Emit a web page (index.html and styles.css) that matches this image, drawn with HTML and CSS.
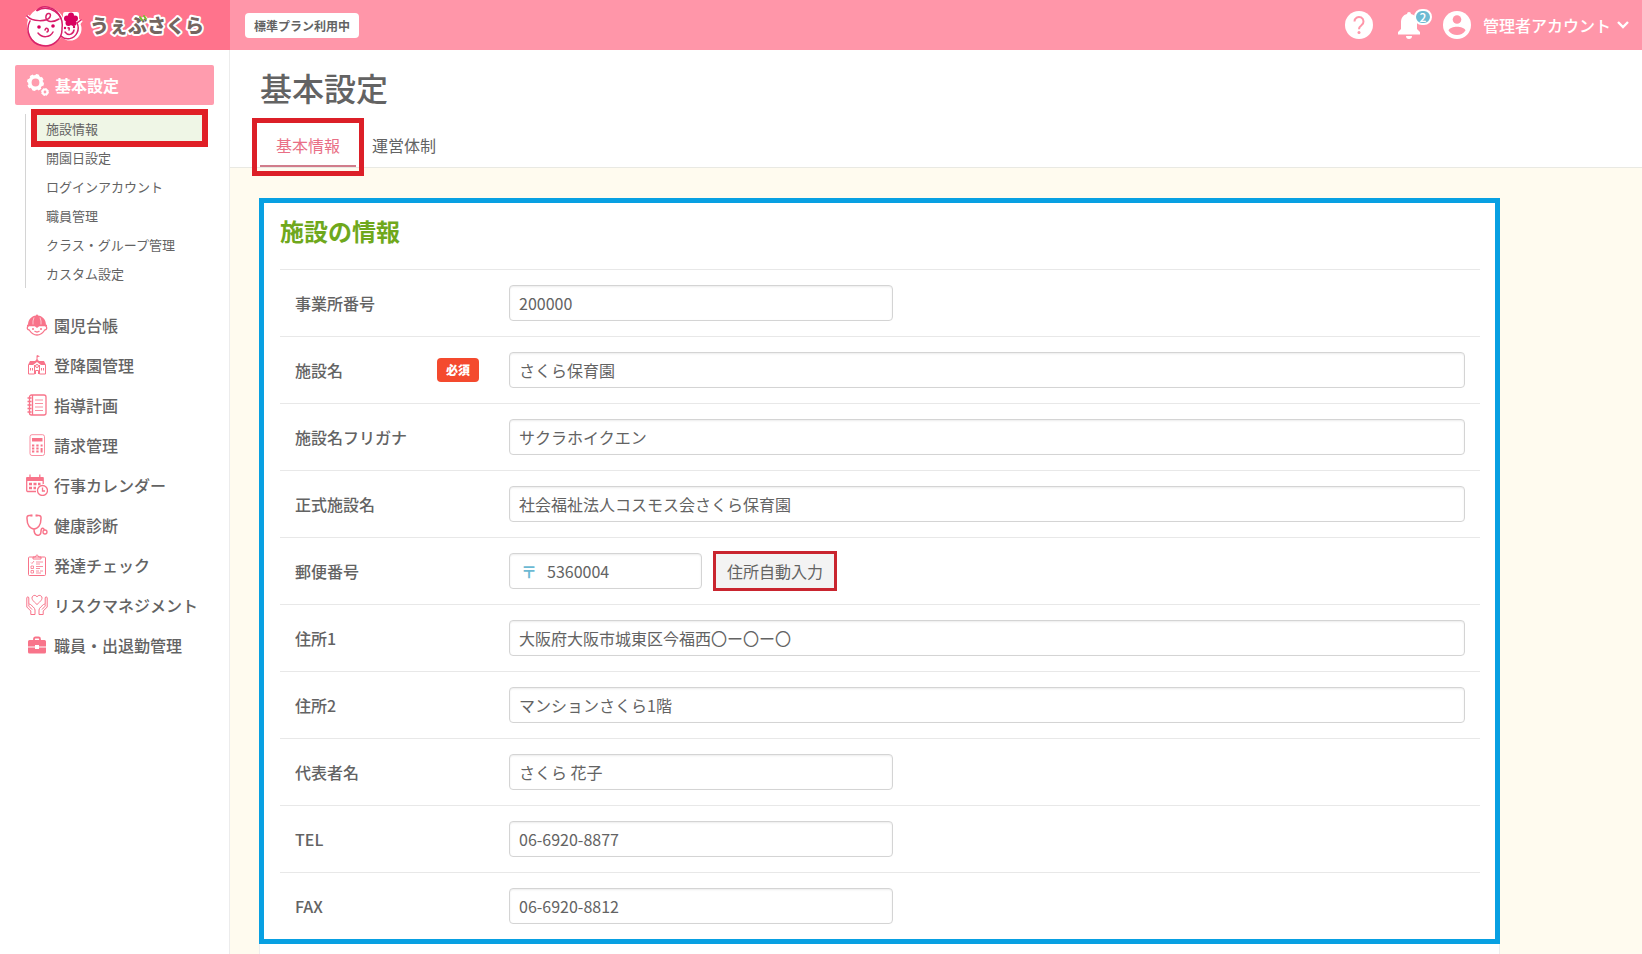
FILE: index.html
```html
<!DOCTYPE html>
<html lang="ja">
<head>
<meta charset="utf-8">
<meta name="viewport" content="width=device-width, initial-scale=1">
<title>基本設定 | うぇぶさくら</title>
<link rel="stylesheet" href="styles.css">
</head>
<body>
<header class="topbar">
  <a class="brand" href="#" aria-label="うぇぶさくら">
    <svg width="186" height="46" viewBox="0 0 186 46">
      <g fill="#fff" stroke="#fff" stroke-width="4" stroke-linejoin="round">
        <circle cx="22" cy="24" r="17"/><circle cx="46" cy="27" r="9.500"/>
        <path d="M3 14q6 7 15 5M57 18q-3 5-8 5" fill="none"/><path d="M41 12h12v10H41z"/>
      </g>
      <g fill="none" stroke="#d8226b" stroke-width="1.500" stroke-linecap="round">
        <path d="M6 19a17 17 0 1 0 32 7A17 17 0 0 0 13 8.500"/>
        <path d="M3 14c5 6 20 6 23 1 2-4-3-5-4-1-1 5 5 8 13 3"/>
        <path d="M13 8.500c5-6 19-5 24 8M37 34c5 5 13 3 16-3 2-4 1-8 0-10l4-3"/>
        <path d="M14 31c4 5 12 5 15-1M21 28q1-3 3-1 1 2-1 3M41 30c3 4 8 3 9-2M44 26q2-1 1 2"/>
      </g>
      <g fill="#d8005f">
        <circle cx="15" cy="25" r="1.800"/><circle cx="29" cy="24" r="1.800"/><circle cx="41" cy="26" r="1.200"/><circle cx="50" cy="25" r="1.200"/>
        <circle cx="47" cy="13.500" r="3"/><circle cx="51" cy="16.500" r="3"/><circle cx="49.500" cy="21" r="3"/><circle cx="44.500" cy="21" r="3"/><circle cx="43" cy="16.500" r="3"/><circle cx="47" cy="18" r="3"/>
      </g>
      <text class="brand-text" x="66" y="31">うぇぶさくら</text>
      <path d="M116 15l2 3M120 14l2 3" stroke="#7dbb2b" stroke-width="2" stroke-linecap="round"/>
    </svg>
  </a>
  <span class="plan">標準プラン利用中</span>
  <nav class="tools">
    <a class="tool" href="#" aria-label="ヘルプ">
      <svg width="28" height="28" viewBox="0 0 28 28"><circle cx="14" cy="14" r="14" fill="#fff"/><path d="M9.500 10.500a4.500 4.500 0 1 1 7 3.700c-1.800 1.300-2.500 2-2.500 4" fill="none" stroke="#ff96a9" stroke-width="2"/><circle cx="14" cy="21.500" r="1.500" fill="#ff96a9"/></svg>
    </a>
    <a class="tool bell" href="#" aria-label="お知らせ">
      <svg width="22" height="28" viewBox="0 0 22 28"><path d="M11 1a2 2 0 0 1 2 2c4 1 6 4 6 8v7l3 3v2.500H0V21l3-3v-7c0-4 2-7 6-8a2 2 0 0 1 2-2zM8 25h6a3 3 0 0 1-6 0z" fill="#fff"/></svg>
      <span class="count">2</span>
    </a>
    <a class="account" href="#">
      <svg width="28" height="28" viewBox="0 0 28 28"><circle cx="14" cy="14" r="14" fill="#fff"/><circle cx="14" cy="8.500" r="4.300" fill="#ff96a9"/><path d="M5.500 19.500c2-5 15-5 17 0-4 6-13 6-17 0z" fill="#ff96a9"/></svg>
      <span>管理者アカウント</span>
      <svg class="chevron" width="12" height="8" viewBox="0 0 12 8"><path d="M1 1l5 5 5-5" fill="none" stroke="#fff" stroke-width="2.400"/></svg>
    </a>
  </nav>
</header>

<div class="layout">
  <aside class="sidebar">
    <a class="nav-current" href="#">
      <svg width="22" height="22" viewBox="0 0 22 22"><g fill="none" stroke="#fff"><circle cx="8.500" cy="8.500" r="5.700" stroke-width="3.600"/><circle cx="8.500" cy="8.500" r="7.600" stroke-width="1.800" stroke-dasharray="3.400 2.570"/><circle cx="18" cy="18" r="2.400" stroke-width="2"/><circle cx="18" cy="18" r="3.500" stroke-width="1" stroke-dasharray="1.600 1.150"/></g></svg>
      基本設定
    </a>
    <ul class="subnav">
      <li><a class="marked" href="#">施設情報</a></li>
      <li><a href="#">開園日設定</a></li>
      <li><a href="#">ログインアカウント</a></li>
      <li><a href="#">職員管理</a></li>
      <li><a href="#">クラス・グループ管理</a></li>
      <li><a href="#">カスタム設定</a></li>
    </ul>
    <ul class="nav">
      <li><a href="#"><svg viewBox="0 0 22 22"><path class="solid" d="M2 11C2 5 6 2 10 1.500a1 1 0 0 1 2 0C16 2 20 5 20 11z"/><path d="M1 11.500h20M2.500 12c-2 1-1.500 4 .7 4 2 3 5 5 7.800 5s5.800-2 7.800-5c2.200 0 2.700-3 .7-4M8.500 17q2.500 2 5 0"/><path d="M8 3.500Q6.500 7 7 10.500M14 3.500q1.500 3.500 1 7" stroke="#fff" stroke-width=".6"/><path class="solid" d="M8 11.500l3 2.500 3-2.500z"/><circle class="solid" cx="7" cy="15" r="1"/><circle class="solid" cx="15" cy="15" r="1"/></svg>園児台帳</a></li>
      <li><a href="#"><svg class="thin" viewBox="0 0 22 22"><path class="solid" d="M2 11l2-4h5l2-2 2 2h5l2 4h-5l-4-3-4 3z"/><path d="M11 6V1.500M2.500 11v9h6v-9M19.500 11v9h-6v-9M4.500 14v2.500M6.500 14v2.500M15.500 14v2.500M17.500 14v2.500M9.500 20v-3.500h3V20"/><path class="solid" d="M11 1l3 1.200-3 1.200z"/><circle cx="11" cy="12" r="1.500"/></svg>登降園管理</a></li>
      <li><a href="#"><svg viewBox="0 0 22 22"><rect x="3.500" y="1" width="16.500" height="20" rx="2"/><path d="M6.500 1v20M1.500 4h4M1.500 7.500h4M1.500 11h4M1.500 14.500h4M1.500 18h4"/><path class="fine" d="M9 6h8M9 9.500h8M9 13h8M9 16.500h8"/></svg>指導計画</a></li>
      <li><a href="#"><svg viewBox="0 0 22 22"><rect class="fine" x="4" y=".7" width="14.500" height="20.800" rx="2"/><path class="solid" d="M6 4h10.500v3.500H6z"/><path d="M6 11.500h2.300m2 0h2.300m2 0h2M6 14.500h2.300m2 0h2.300M6 17.500h2.300m2 0h2.300m3-3.500v4.500" stroke-width="2"/></svg>請求管理</a></li>
      <li><a href="#"><svg viewBox="0 0 22 22"><path d="M10 17.500H1.500A1 1 0 0 1 .7 16.500V4h16.500v6M4 .5v4M13.800.5v4"/><path class="solid" d="M1 3h16v4H1z"/><path d="M3 10h3m1.500 0h3m1.500 0h2.500M3 14h3m1.500 0h2.500" stroke-width="2.400"/><circle cx="16.500" cy="16.500" r="5"/><path d="M16.500 13.500v3.500h2.500"/></svg>行事カレンダー</a></li>
      <li><a href="#"><svg viewBox="0 0 22 22"><path d="M5.500 1.500H3.200C1.500 1.500.8 2.500 1 4.500 1 11 4 15 8 15s7-4 7-10.500c.2-2-.5-3-2.200-3h-2.300M8 15c0 8 7 8 7 2.500 0-4 2.500-4 3.300-1.500" stroke-width="1.500"/><circle cx="19" cy="18" r="2"/><path d="M5.500.5v2M10.500.5v2" stroke-width="2"/></svg>健康診断</a></li>
      <li><a href="#"><svg class="thin" viewBox="0 0 22 22"><rect x="2.500" y="3" width="17" height="18.500" rx="1"/><path d="M7 5V3h2.500c0-2.500 3-2.500 3 0H15v2z"/><path class="fine" d="M5 8.500l1 1 2-2.500M5 12h2.500v2.500H5zM5 16.500h2.500V19H5zM10 8h7M10 10h4M10 12.500h7M10 14.500h4M10 17h3M14 17h3M10 19h5"/></svg>発達チェック</a></li>
      <li><a href="#"><svg class="thin" viewBox="0 0 22 22"><path d="M11 10.500C7 7 6 5.500 6 4c0-3 4-3.500 5-1 1-2.500 5-2 5 1 0 1.500-1 3-5 6.500zM.8 4v9l4 4v3.500H9V16c0-2-3-4-4.500-5.500-1.200-1-2.500.5-1.300 2L6 15.500M.8 4c0-1.500 2-1.500 2 0v6.500M21.200 4v9l-4 4v3.500H13V16c0-2 3-4 4.500-5.500 1.200-1 2.500.5 1.300 2L16 15.500M21.200 4c0-1.500-2-1.500-2 0v6.500"/></svg>リスクマネジメント</a></li>
      <li><a href="#"><svg viewBox="0 0 22 22"><path class="solid" d="M3.500 6h15A1.500 1.500 0 0 1 20 7.500v5h-7V11H9v1.500H2v-5A1.500 1.500 0 0 1 3.500 6zM2 13.500h7V15h4v-1.500h7v4.500a1.500 1.500 0 0 1-1.500 1.500h-15A1.500 1.500 0 0 1 2 18z"/><path d="M8 6.500V5q0-1.500 1.500-1.500h3Q14 3.500 14 5v1.500" stroke-width="1.800"/></svg>職員・出退勤管理</a></li>
    </ul>
  </aside>

  <main class="main">
    <div class="page-head">
      <h1>基本設定</h1>
      <nav class="tabs">
        <a class="tab tab-active" href="#">基本情報</a>
        <a class="tab" href="#">運営体制</a>
      </nav>
    </div>
    <div class="content">
      <form class="panel">
        <h2>施設の情報</h2>
        <div class="row"><label for="office-no">事業所番号</label><input class="field half" id="office-no" type="text" value="200000"></div>
        <div class="row"><label for="name">施設名 <span class="required">必須</span></label><input class="field" id="name" type="text" value="さくら保育園"></div>
        <div class="row"><label for="kana">施設名フリガナ</label><input class="field" id="kana" type="text" value="サクラホイクエン"></div>
        <div class="row"><label for="formal">正式施設名</label><input class="field" id="formal" type="text" value="社会福祉法人コスモス会さくら保育園"></div>
        <div class="row"><label for="zip">郵便番号</label>
          <div class="zip-group">
            <div class="zip"><span class="zip-mark">〒</span><input id="zip" type="text" value="5360004"></div>
            <button class="autofill" type="button">住所自動入力</button>
          </div>
        </div>
        <div class="row"><label for="addr1">住所1</label><input class="field" id="addr1" type="text" value="大阪府大阪市城東区今福西〇ー〇ー〇"></div>
        <div class="row"><label for="addr2">住所2</label><input class="field" id="addr2" type="text" value="マンションさくら1階"></div>
        <div class="row"><label for="owner">代表者名</label><input class="field half" id="owner" type="text" value="さくら 花子"></div>
        <div class="row"><label for="tel">TEL</label><input class="field half" id="tel" type="text" value="06-6920-8877"></div>
        <div class="row"><label for="fax">FAX</label><input class="field half" id="fax" type="text" value="06-6920-8812"></div>
      </form>
      <div class="panel-rest"></div>
    </div>
  </main>
</div>
</body>
</html>
```
FILE: styles.css
```css
* { box-sizing: border-box; }

body {
  margin: 0;
  min-height: 100vh;
  display: flex;
  flex-direction: column;
  font-family: "Noto Sans CJK JP", sans-serif;
  font-size: 16px;
  line-height: 24px;
  color: #636363;
  background: #fff;
}

a { color: inherit; text-decoration: none; }
ul { margin: 0; padding: 0; list-style: none; }
svg { display: block; flex: none; }

.topbar {
  display: flex;
  align-items: center;
  height: 50px;
  background: #ff96a9;
}
.brand {
  display: flex;
  align-items: center;
  width: 230px;
  height: 50px;
  padding-left: 24px;
  background: #ff738c;
}
.brand-text {
  font-size: 19px;
  font-weight: 900;
  fill: #74655f;
  stroke: #fff;
  stroke-width: 4px;
  stroke-linejoin: round;
  paint-order: stroke;
}
.plan {
  margin-left: 15px;
  padding: 1px 9px 0;
  border-radius: 4px;
  background: #fff;
  font-size: 12px;
  font-weight: 700;
}
.tools {
  display: flex;
  align-items: center;
  margin-left: auto;
  padding-right: 13px;
  color: #fff;
  font-weight: 500;
}
.bell { position: relative; margin: 0 23px 0 25px; }
.count {
  position: absolute;
  left: 16px;
  top: -2px;
  width: 18px;
  height: 16px;
  border: 2px solid #fff;
  border-radius: 8px;
  background: #6dbbd3;
  font-size: 12px;
  line-height: 12px;
  text-align: center;
}
.account { display: flex; align-items: center; gap: 12px; }
.chevron { margin-left: -6px; }

.layout { flex: 1; display: flex; }

.sidebar {
  flex: none;
  width: 230px;
  padding: 15px 15px 0;
  border-right: 1px solid #ececec;
}
.nav-current {
  display: flex;
  align-items: center;
  gap: 6px;
  height: 40px;
  padding-left: 12px;
  border-radius: 2px;
  background: #ff9cae;
  color: #fff;
  font-weight: 700;
}
.subnav {
  margin: 9px 0 17px 10px;
  border-left: 1px solid #d4d4d4;
  font-size: 13px;
}
.subnav a {
  display: block;
  padding-left: 20px;
  line-height: 29px;
}
.subnav .marked {
  position: relative;
  margin: 0 10px;
  padding-left: 10px;
  background: #eff6e6;
}
.marked::after {
  content: "";
  position: absolute;
  inset: -5px -4px -4px -5px;
  border: 6px solid #e01f26;
}
.nav a {
  display: flex;
  align-items: center;
  gap: 6px;
  height: 40px;
  padding-left: 11px;
  font-weight: 500;
}
.nav svg {
  width: 22px;
  height: 22px;
  fill: none;
  stroke: #f8748a;
  stroke-width: 1.300;
}
.nav .thin { stroke-width: 1; }
.nav .fine { stroke-width: .8; }
.nav .solid { fill: #f8748a; stroke: none; }

.main {
  flex: 1;
  min-width: 0;
  display: flex;
  flex-direction: column;
}
.page-head {
  padding: 13px 30px 0;
  border-bottom: 1px solid #e9e9e3;
}
h1 {
  margin: 0;
  font-size: 32px;
  font-weight: 500;
  line-height: 48px;
}
.tabs { display: flex; padding-top: 14px; }
.tab {
  position: relative;
  height: 42px;
  padding: 0 16px;
  line-height: 40px;
}
.tab-active {
  border-bottom: 2px solid #d17c8b;
  color: #e96f86;
}
.tab-active::after {
  content: "";
  position: absolute;
  inset: -7px -8px -11px;
  border: 5px solid #dc1f28;
}

.content {
  flex: 1;
  display: flex;
  flex-direction: column;
  padding: 30px 29px 0;
  background: #fffbef;
}
.panel {
  width: 100%;
  max-width: 1241px;
  padding: 0 15px 0 16px;
  border: 5px solid #08a0e2;
  background: #fff;
}
.panel-rest {
  flex: 1;
  width: 100%;
  max-width: 1241px;
  min-height: 8px;
  border: 1px solid #eee;
  border-width: 0 1px;
  background: #fff;
}
h2 {
  margin: 0;
  padding: 10px 0 20px;
  font-size: 24px;
  font-weight: 700;
  line-height: 36px;
  color: #6fa81c;
}
.row {
  display: grid;
  grid-template-columns: 184px 1fr;
  column-gap: 30px;
  align-items: center;
  height: 67px;
  padding: 0 15px;
  border-top: 1px solid #e8e8e8;
}
.row label {
  display: flex;
  align-items: center;
  justify-content: space-between;
  font-weight: 500;
}
.required {
  padding: 0 9px;
  border-radius: 4px;
  background: #f44a2e;
  color: #fff;
  font-size: 12px;
  font-weight: 900;
}
input, button {
  font: inherit;
  color: inherit;
}
.field, .zip {
  width: 100%;
  height: 36px;
  padding: 0 9px;
  border: 1px solid #d4d4d4;
  border-radius: 4px;
  background: #fff;
  box-shadow: inset 0 1px 2px #00000014;
}
.half { max-width: 384px; }
.zip-group { display: flex; align-items: center; gap: 11px; }
.zip {
  display: flex;
  align-items: center;
  gap: 10px;
  width: 193px;
  padding-left: 11px;
}
.zip-mark { color: #6cb9d3; font-weight: 700; }
.zip input {
  flex: 1;
  min-width: 0;
  padding: 0;
  border: 0;
  background: none;
}
.autofill {
  height: 40px;
  padding: 0 11px;
  border: 3px solid #c9252f;
  background: #f3f3f3;
}
```
